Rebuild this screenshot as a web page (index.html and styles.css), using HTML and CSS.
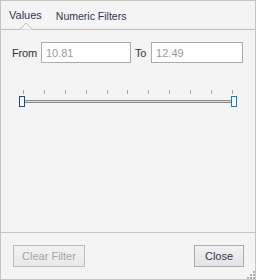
FILE: index.html
```html
<!DOCTYPE html>
<html lang="en">
<head>
  <meta charset="UTF-8" />
  <title>Filter</title>
  <link rel="stylesheet" href="styles.css">
</head>
<body>
  <div class="panel">
    <div class="tabs">
      <div class="tab active">Values
        <svg class="notch" width="15" height="8" viewBox="0 0 15 8">
          <polyline points="0.5,7.5 7,1 13.5,7.5" fill="#f4f4f4" stroke="#bdbdbd" stroke-width="1"/>
        </svg>
      </div>
      <div class="tab">Numeric Filters</div>
    </div>

    <div class="content">
      <div class="range-row">
        <label for="from">From</label>
        <input type="text" id="from" class="field" value="10.81">
        <label for="to">To</label>
        <input type="text" id="to" class="field" value="12.49">
      </div>

      <div class="slider">
        <div class="ticks">
          <span></span><span></span><span></span><span></span><span></span><span></span>
          <span></span><span></span><span></span><span></span><span></span>
        </div>
        <div class="track"></div>
        <div class="thumb thumb-left"></div>
        <div class="thumb thumb-right"></div>
      </div>
    </div>

    <div class="footer">
      <button class="btn" disabled>Clear Filter</button>
      <button class="btn btn-close">Close</button>
    </div>

    <svg class="grip" width="9" height="9" viewBox="0 0 9 9">
      <rect x="7" y="1" width="2" height="2" fill="#b0b0b0"/>
      <rect x="4" y="4" width="2" height="2" fill="#b0b0b0"/>
      <rect x="7" y="4" width="2" height="2" fill="#b0b0b0"/>
      <rect x="1" y="7" width="2" height="2" fill="#b0b0b0"/>
      <rect x="4" y="7" width="2" height="2" fill="#b0b0b0"/>
      <rect x="7" y="7" width="2" height="2" fill="#b0b0b0"/>
    </svg>
  </div>
</body>
</html>
```

FILE: styles.css
```css
body {
  margin: 0;
  font-family: "Liberation Sans", Arial, sans-serif;
  font-size: 11px;
  background-color: #f4f4f4;
}
.panel {
  position: relative;
  width: 256px;
  height: 280px;
  box-sizing: border-box;
  border: 1px solid #c6c6c6;
  background-color: #f4f4f4;
  display: flex;
  flex-direction: column;
}
.tabs {
  display: flex;
  height: 28px;
  border-bottom: 1px solid #bdbdbd;
  padding-left: 8px;
}
.tab {
  position: relative;
  padding-top: 8px;
  margin-right: 14px;
  color: #2e3650;
  font-size: 11px;
}
.tab + .tab {
  font-size: 10.5px;
  padding-top: 8.5px;
}
.notch {
  position: absolute;
  left: 10px;
  bottom: -1px;
}
.content {
  flex: 1;
  padding: 12px 12px 0 11px;
}
.range-row {
  display: flex;
  align-items: center;
  color: #333;
}
.range-row label {
  margin-right: 4px;
  letter-spacing: -0.2px;
}
.range-row label[for="to"] {
  margin-left: 4px;
  margin-right: 5px;
}
.field {
  box-sizing: border-box;
  width: 90px;
  height: 21px;
  margin: 0;
  padding: 0 4px;
  border: 1px solid #ababab;
  background: #fff;
  color: #9a9a9a;
  font-family: "Liberation Sans", Arial, sans-serif;
  font-size: 11px;
}
#to {
  width: 92px;
}
.slider {
  position: relative;
  width: 218px;
  margin: 27px 0 0 7px;
  height: 17px;
}
.ticks {
  display: flex;
  justify-content: space-between;
  padding: 0 4px;
  height: 4px;
}
.ticks span {
  width: 1px;
  height: 4px;
  background: #aaa;
}
.track {
  margin: 6px 4px 0 5px;
  height: 1px;
  border-top: 1px solid #8a8a8a;
  border-bottom: 1px solid #8a8a8a;
  background: #dcdcdc;
}
.thumb {
  position: absolute;
  top: 6px;
  width: 4px;
  height: 9px;
  background: #fafafa;
}
.thumb-left {
  left: 0;
  border: 1px solid #1d4b8a;
}
.thumb-right {
  right: 0;
  border: 1px solid #1677d2;
}
.footer {
  display: flex;
  justify-content: space-between;
  align-items: flex-start;
  height: 34px;
  padding: 12px 11px 0 12px;
  border-top: 1px solid #c6c6c6;
}
.btn {
  height: 22px;
  margin: 0;
  padding: 0;
  border: 1px solid #acacac;
  background: linear-gradient(#f1f1f1, #e4e4e4);
  color: #2e3650;
  font-family: "Liberation Sans", Arial, sans-serif;
  font-size: 11px;
  width: 72px;
}
.btn:disabled {
  border-color: #bdbdbd;
  color: #a6a6a6;
  background: linear-gradient(#f2f2f2, #e9e9e9);
}
.btn-close {
  width: 50px;
}
.grip {
  position: absolute;
  right: 0;
  bottom: 0;
}
```
